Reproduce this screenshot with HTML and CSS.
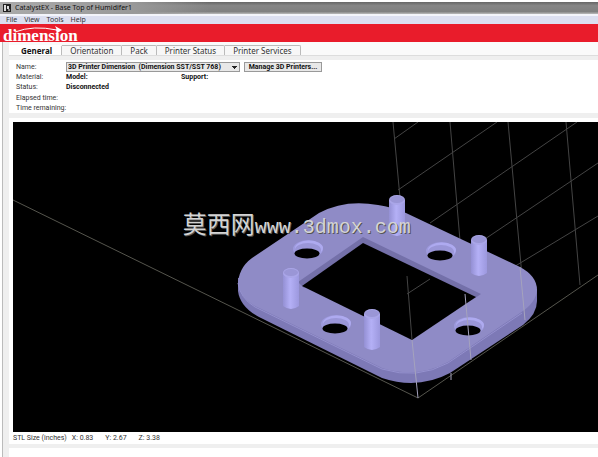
FILE: index.html
```
<!DOCTYPE html>
<html lang="en">
<head>
<meta charset="utf-8">
<title>CatalystEX - Base Top of Humidifer1</title>
<link rel="stylesheet" href="styles.css">
</head>
<body>
<header class="titlebar">
  <svg class="app-icon" viewBox="0 0 8 8" aria-hidden="true"><rect width="8" height="8" fill="#222"/><path d="M1 1h2v6H1zM4 2h2v3H4z" fill="#ddd"/><path d="M5 5h2v2H5z" fill="#888"/></svg>
  <span>CatalystEX - Base Top of Humidifer1</span>
</header>
<nav class="menubar">
  <button type="button">File</button><button type="button">View</button><button type="button">Tools</button><button type="button">Help</button>
</nav>
<div class="brand">
  <span class="brand-name">dimension</span>
  <svg class="swoosh" viewBox="0 0 76 14" aria-hidden="true"><path d="M12 6Q30-1 54 4" fill="none" stroke="#fff" stroke-width="1"/><path d="M52 0l7 4-6 4 1-4z" fill="#fff"/></svg>
</div>
<main class="workspace">
  <div class="tabs" role="tablist">
    <button type="button" role="tab" class="tab active" aria-selected="true">General</button>
    <button type="button" role="tab" class="tab">Orientation</button>
    <button type="button" role="tab" class="tab">Pack</button>
    <button type="button" role="tab" class="tab">Printer Status</button>
    <button type="button" role="tab" class="tab">Printer Services</button>
  </div>
  <section class="info">
    <label for="printer">Name:</label>
    <div class="printer-row">
      <select id="printer"><option>3D Printer Dimension&nbsp; (Dimension SST/SST 768)</option></select>
      <button type="button" class="manage">Manage 3D Printers...</button>
    </div>
    <span>Material:</span>
    <div class="materials"><b>Model:</b><b>Support:</b></div>
    <span>Status:</span><b>Disconnected</b>
    <span class="wide">Elapsed time:</span>
    <span class="wide">Time remaining:</span>
  </section>
  <section class="preview">
    <div class="viewport">
      <svg class="scene" viewBox="13 122 585 310" preserveAspectRatio="xMinYMin slice" role="img" aria-label="Model preview">
        <defs>
          <linearGradient id="pin"><stop offset="0" stop-color="#9490d4"/><stop offset=".45" stop-color="#b4b0f6"/><stop offset="1" stop-color="#9c98de"/></linearGradient>
          <g id="peg"><path d="M-8 0V33Q0 39 8 33V0z" fill="url(#pin)"/><ellipse rx="8" ry="5" fill="#aaa6e8"/><ellipse cy="-.5" rx="7" ry="3.5" fill="#9a96d6"/></g>
          <g id="hole"><ellipse cy="-1" rx="15" ry="9" fill="#9e9ade"/><ellipse cx="1" cy="-2" rx="14" ry="7.5" fill="#aeaaf0"/><ellipse cy="0" rx="13" ry="7" fill="#9a96d8"/><ellipse cx="-1" cy="3.5" rx="12.5" ry="5" fill="#000"/></g>
        </defs>
        <rect x="13" y="122" width="585" height="310" fill="#000"/>
        <g class="grid">
          <path class="floor" d="M13 200L418 398L598 275"/>
          <path d="M393 122L410 306M450 122L465 300M508 122L522 276M566 122L580 285"/>
          <path d="M394 139L418 122M398 190L497 122M430 223L577 122M485 239L598 163M512 268L598 216"/>
        </g>
        <path d="M238 278V291Q240 307 259 317L382 378Q418 390 450 373L523 325Q537 314 537 301V289z" fill="#7d79b6"/>
        <path fill="#8f8bc6" d="M319 213Q345 199 378 205Q392 207 406 213L520 267Q537 276 537 290Q536 303 520 313L448 362Q417 379 382 368L255 306Q239 297 238 282Q240 265 255 256z"/>
        <path d="M363 237L298 282L304 288L363 246L472 300L481 294z" fill="#7470a9"/>
        <path d="M363 243L302 286L412 340L476 297z" fill="#000"/>
        <path d="M238 283Q240 298 255 307L382 369Q417 380 448 363L522 313" fill="none" stroke="#9591ce"/>
        <path class="grid" d="M407 276L412 340M407 294L430 279"/>
        <use href="#hole" x="308" y="250"/><use href="#hole" x="441" y="252"/><use href="#hole" x="336" y="325"/><use href="#hole" x="469" y="327"/>
        <use href="#peg" x="397" y="200"/><use href="#peg" x="479" y="240"/><use href="#peg" x="291" y="273"/><use href="#peg" x="372" y="314"/>
        <path class="grid front" d="M412 340L418 398M465 294L471 360M520 267L525 320M451 373V380"/>
      </svg>
      <div class="watermark"><span class="han">莫西网</span>www.3dmox.com</div>
    </div>
    <div class="dimensions"><span>STL Size (inches)</span><span>X: 0.83</span><span>Y: 2.67</span><span>Z: 3.38</span></div>
  </section>
  <section class="below"></section>
</main>
</body>
</html>
```
FILE: styles.css
```
* { box-sizing: border-box; }
body {
  margin: 0;
  min-height: 100vh;
  display: flex;
  flex-direction: column;
  background: #fff;
  color: #333;
  font: 7px/10px Roboto, sans-serif;
}
button, select { font: inherit; color: inherit; }
b { color: #111; }
.titlebar {
  display: flex;
  align-items: center;
  gap: 4px;
  height: 12px;
  margin-top: 2px;
  padding-left: 3px;
  color: #111;
  font: 7px/12px "Noto Sans", sans-serif;
  background: linear-gradient(90deg, #aaa, #999 22%, transparent 35%), linear-gradient(#666, #868686 30%, #808080 80%, #bbb);
}
.app-icon { width: 8px; height: 8px; }
.menubar {
  display: flex;
  gap: 7px;
  height: 10px;
  padding-left: 6px;
  background: #dcdff0;
  border-top: 2px solid #f3f4fa;
}
.menubar button { padding: 0; border: 0; background: none; font: 7px/8px "Noto Sans", sans-serif; }
.brand {
  position: relative;
  height: 18px;
  padding-left: 3px;
  background: #e91c2b;
  color: #fff;
}
.brand-name { display: block; font: bold 17px/23px "Liberation Serif", serif; }
.swoosh { position: absolute; left: 3px; top: 2px; width: 76px; height: 14px; }
.workspace {
  flex: 1;
  display: flex;
  flex-direction: column;
  margin-left: 2px;
  padding-left: 6px;
  border-left: 1px solid #bbb;
  background: #efefef;
}
.tabs {
  display: flex;
  align-items: flex-end;
  height: 14px;
  padding-top: 4px;
  background: #fafafa;
  border-bottom: 1px solid #ddd;
}
.tab {
  height: 10px;
  padding: 0 8px;
  border: 1px solid #bbb;
  border-left: 0;
  border-bottom: 0;
  border-radius: 0 2px 0 0;
  background: #f7f7f7;
  font: 8px/8px "Noto Sans", sans-serif;
}
.tab.active { padding: 0 9px 0 12px; font-weight: bold; color: #111; background: #fff; border-top-color: #fff; }
.info {
  display: grid;
  grid-template-columns: 50px 1fr;
  align-items: center;
  margin-top: 4px;
  padding: 2px 7px 0;
  min-height: 53px;
  background: #fff;
}
.wide { grid-column: 1 / -1; }
.printer-row { display: flex; gap: 4px; }
.printer-row select {
  appearance: none;
  width: 174px;
  height: 10px;
  padding: 0 1px;
  border: 1px solid #999;
  border-radius: 0;
  color: #111;
  font-weight: bold;
  line-height: 8px;
  background: linear-gradient(#222, #222) 165px 3px / 5px 1px no-repeat,
    linear-gradient(#222, #222) 166px 4px / 3px 1px no-repeat,
    linear-gradient(#222, #222) 167px 5px / 1px 1px no-repeat, #e8e8e8;
}
.manage { width: 78px; height: 10px; padding: 0; border: 1px solid #999; color: #111; font-weight: bold; line-height: 8px; background: #e8e8e8; white-space: nowrap; }
.materials { display: grid; grid-template-columns: 115px auto; justify-content: start; }
.preview { margin-top: 5px; padding: 4px 0 0 4px; background: #fff; }
.viewport { position: relative; overflow: hidden; background: #000; }
.scene { display: block; width: 100%; }
.grid { fill: none; stroke: #444; stroke-width: 1; }
.floor { stroke: #55554d; }
.front { stroke: #a5a3bd; }
.watermark {
  position: absolute;
  left: 29%;
  top: 92px;
  color: #d4d4d4;
  font: 20px/26px "Liberation Mono", "Noto Sans CJK SC", monospace;
  text-shadow: 1px 1px #555;
  white-space: nowrap;
}
.han { font-size: 24px; }
.dimensions { display: flex; gap: 12px; height: 12px; line-height: 12px; }
.dimensions span:first-child { margin-right: -7px; }
.below { flex: 1; margin-top: 4px; background: #fff; }
```
